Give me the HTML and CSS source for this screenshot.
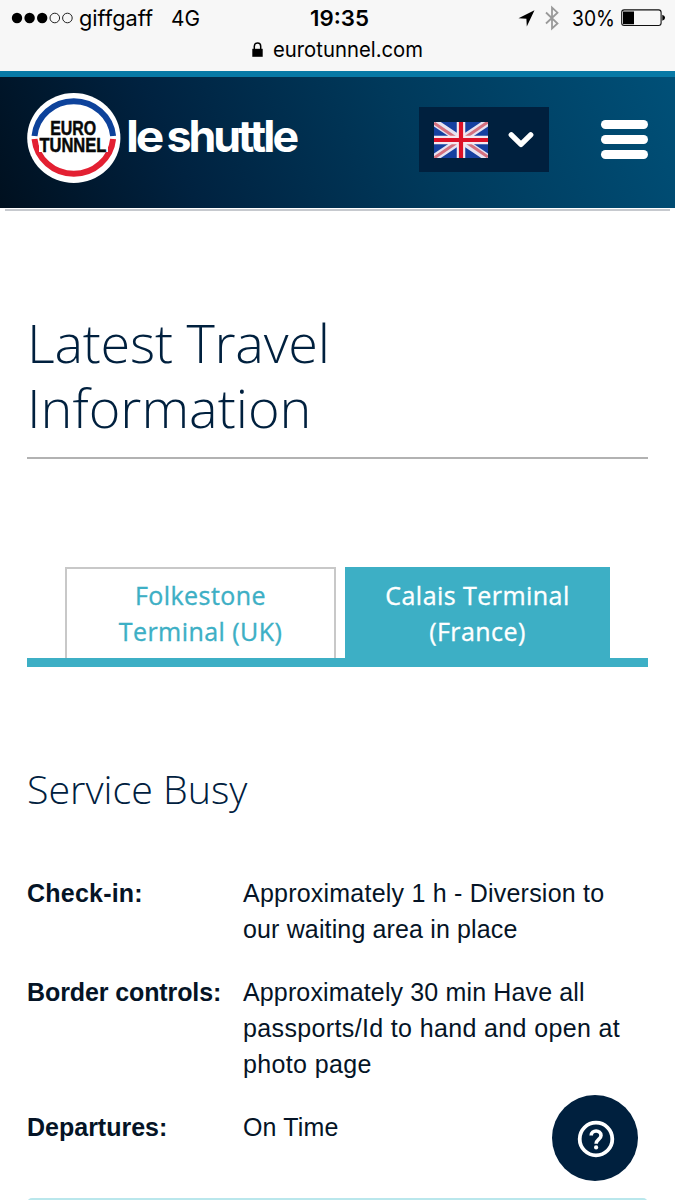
FILE: index.html
```html
<!DOCTYPE html>
<html lang="en">
<head>
<meta charset="utf-8">
<title>Eurotunnel Le Shuttle</title>
<link rel="stylesheet" href="styles.css">
</head>
<body>
<div class="browser">
  <div class="status">
    <div class="status-left">
      <svg width="62" height="12" viewBox="0 0 62 12"><g fill="#000"><circle cx="6" cy="6" r="5.2"/><circle cx="18.6" cy="6" r="5.2"/><circle cx="31.2" cy="6" r="5.2"/></g><g fill="none" stroke="#222" stroke-width="1"><circle cx="43.8" cy="6" r="4.8"/><circle cx="56.4" cy="6" r="4.8"/></g></svg>
      <svg class="carrier" width="130" height="30"><text x="0" y="21" textLength="74" lengthAdjust="spacingAndGlyphs">giffgaff</text><text x="92" y="21" textLength="29" lengthAdjust="spacingAndGlyphs">4G</text></svg>
    </div>
    <div class="clock"><svg width="60" height="30"><text x="0" y="21" textLength="59" lengthAdjust="spacingAndGlyphs">19:35</text></svg></div>
    <div class="status-right">
      <svg width="17" height="17" viewBox="0 0 17 17"><path d="M16.5 .3L8.8 16.5 8.4 8.8.5 8.2z"/></svg>
      <svg class="bluetooth" width="14" height="24" viewBox="0 0 14 24"><path d="M1 6.5L12.5 17.5 7 22.5V1.5L12.5 6.7 1 17.5" fill="none" stroke="#999" stroke-width="1.8"/></svg>
      <svg class="percent" width="45" height="30"><text x="0" y="21" textLength="43" lengthAdjust="spacingAndGlyphs">30%</text></svg>
      <svg class="battery" width="45" height="18" viewBox="0 0 45 18"><rect x=".7" y=".9" width="39.4" height="15.6" rx="2.5" fill="none" stroke="#111" stroke-width="1.1"/><path d="M2 2.4h11v12.8H2zM41.3 5.8q2.8 1 2.8 3t-2.8 3z"/></svg>
    </div>
  </div>
  <div class="address">
    <svg width="11" height="16" viewBox="0 0 11 16"><path d="M.3 6.8h10.4v8H.3z"/><path d="M2.3 7V4.3a3.2 3.2 0 0 1 6.4 0V7" fill="none" stroke="#000" stroke-width="1.5"/></svg>
    <svg width="160" height="28"><text x="0" y="21" textLength="150" lengthAdjust="spacingAndGlyphs">eurotunnel.com</text></svg>
  </div>
</div>
<header class="site-header">
  <svg class="logo" width="285" height="92" viewBox="0 0 285 92">
    <ellipse cx="46.8" cy="45" rx="46.6" ry="45" fill="#fff"/>
    <path d="M7.5 43a39.5 38.6 0 0 1 78.6 0" fill="none" stroke="#0d429b" stroke-width="6"/>
    <path d="M7.5 46a39.5 38.6 0 0 0 78.6 0" fill="none" stroke="#e32032" stroke-width="6"/>
    <path d="M12 45h69v14H12z" fill="#fff"/>
    <g class="badge"><text x="23.2" y="41.5" textLength="46" lengthAdjust="spacingAndGlyphs">EURO</text><text x="12.4" y="59.3" textLength="67" lengthAdjust="spacingAndGlyphs">TUNNEL</text></g>
    <g class="wordmark"><text x="99" y="59" textLength="35" lengthAdjust="spacingAndGlyphs">le</text><text x="139.5" y="59" textLength="129.5" lengthAdjust="spacingAndGlyphs">shuttle</text></g>
  </svg>
  <div class="header-tools">
    <div class="language">
      <svg class="flag" width="54" height="36" viewBox="0 0 54 36"><path fill="#1540a0" d="M0 0h54v36H0z"/><path d="M0 0l54 36M54 0L0 36" stroke="#e6e3f1" stroke-width="7.5"/><path d="M0 1L25 18M54 0L29 17M0 36L25 19M54 35L29 18" stroke="#d4707e" stroke-width="3"/><path d="M27 0v36M0 18h54" stroke="#f5e9f0" stroke-width="8.5"/><path d="M27 0v36M0 18h54" stroke="#dc1026" stroke-width="4.2"/></svg>
      <svg width="26" height="18" viewBox="0 0 26 18"><path d="M3.3 3.8L13 13.4 22.7 3.8" fill="none" stroke="#fff" stroke-width="5.4" stroke-linecap="round" stroke-linejoin="round"/></svg>
    </div>
    <div class="menu"><span></span><span></span><span></span></div>
  </div>
</header>
<div class="header-shadow"></div>
<main class="content">
  <h1><span class="heading-line">Latest Travel</span><br>Information</h1>
  <div class="tabs">
    <div class="tab">Folkestone<br>Terminal (UK)</div>
    <div class="tab active">Calais Terminal<br>(France)</div>
  </div>
  <h2>Service Busy</h2>
  <dl class="details">
    <dt class="loose">Check-in:</dt><dd><span class="loose">Approximately 1 h - Diversion to</span><br>our waiting area in place</dd>
    <dt class="tight">Border controls:</dt><dd>Approximately 30 min Have all<br><span class="looser">passports/Id to hand and open at</span><br><span class="looser">photo page</span></dd>
    <dt>Departures:</dt><dd>On Time</dd>
  </dl>
  <div class="notice"></div>
</main>
<div class="help">
  <svg width="38" height="38" viewBox="0 0 38 38" fill="none" stroke="#fff"><circle cx="19" cy="19" r="16.3" stroke-width="3.8"/><path d="M14.2 15.6c0-6.2 9.8-6.1 9.8-.2 0 4-4.9 3.9-4.9 8.4" stroke-width="3.6"/><circle cx="19.1" cy="27.4" r="2.1" fill="#fff" stroke="none"/></svg>
</div>
</body>
</html>
```
FILE: styles.css
```css
* { box-sizing: border-box; }
body { margin: 0; width: 675px; height: 1200px; overflow: hidden; position: relative; background: #fff; color: #051426; font-family: "Liberation Sans", Arial, sans-serif; }
svg { display: block; flex: none; overflow: visible; }
.browser { height: 71px; background: #f7f7f7; font-family: Inter, sans-serif; font-size: 22px; }
.status { height: 36px; display: grid; grid-template-columns: 310px 1fr 157px; }
.status-left, .status-right { display: flex; align-items: center; }
.status-left { padding-left: 11px; gap: 6px; }
.clock { font-weight: 600; padding-top: 5px; }
.carrier, .percent { margin-top: 4px; }
.bluetooth { margin-left: 10px; }
.percent { margin-left: 13px; }
.battery { margin-left: 4px; }
.address { height: 28px; display: flex; align-items: center; padding-left: 252px; gap: 10px; font-size: 21px; }
.site-header { height: 137px; border-top: 6px solid #0779a6; background: linear-gradient(65deg, #00101f 0%, #002240 27%, #00395b 60%, #005078 100%); display: flex; justify-content: space-between; padding: 16px 27px 0; }
.badge { font: 700 21px "Liberation Sans", sans-serif; fill: #080808; stroke: #080808; stroke-width: .5; }
.wordmark { font: 700 44px Inter, sans-serif; letter-spacing: -3px; fill: #fff; }
.header-tools { display: flex; gap: 52px; padding-top: 14px; }
.language { width: 130px; height: 65px; background: #00203e; display: flex; align-items: center; padding-left: 15px; gap: 20px; }
.flag { overflow: hidden; }
.menu { display: flex; flex-direction: column; gap: 6px; padding-top: 13px; }
.menu span { width: 47px; height: 9px; border-radius: 5px; background: #fff; }
.header-shadow { height: 3px; margin: 0 5px; border-bottom: 2px solid #c6c9ce; }
.content { padding: 99px 27px 0; }
h1, h2 { font-family: "Open Sans", sans-serif; font-weight: 300; color: #00203e; margin: 0; }
h1 { font-size: 54px; line-height: 65px; height: 149px; border-bottom: 2px solid #b2b2b2; }
.heading-line { letter-spacing: -.25px; }
.tabs { margin-top: 108px; height: 100px; border-bottom: 9px solid #3dafc5; padding-left: 38px; display: flex; gap: 9px; }
.tab { width: 271px; border: 2px solid #c8c8c8; border-bottom: 0; padding-top: 8px; text-align: center; font: 500 25px/36px "Open Sans", sans-serif; letter-spacing: .45px; -webkit-text-stroke: .35px currentColor; color: #3dafc5; }
.active { width: 265px; background: #3dafc5; border-color: #3dafc5; color: #fff; }
h2 { font-size: 39.4px; line-height: 50px; margin-top: 97px; }
.details { display: grid; grid-template-columns: 216px 1fr; row-gap: 27px; margin: 61px 0 0; font-size: 25px; line-height: 36px; }
dt { font-weight: 700; }
dd { margin: 0; letter-spacing: .14px; }
.loose { letter-spacing: .22px; }
.looser { letter-spacing: .36px; }
.tight { letter-spacing: -.1px; }
.notice { height: 30px; margin-top: 53px; background: #b9e7ec; border-radius: 5px; }
.help { position: absolute; left: 552px; top: 1095px; width: 86px; height: 86px; border-radius: 50%; background: #00203e; display: flex; align-items: center; justify-content: center; padding-top: 2px; padding-left: 2px; }
```
